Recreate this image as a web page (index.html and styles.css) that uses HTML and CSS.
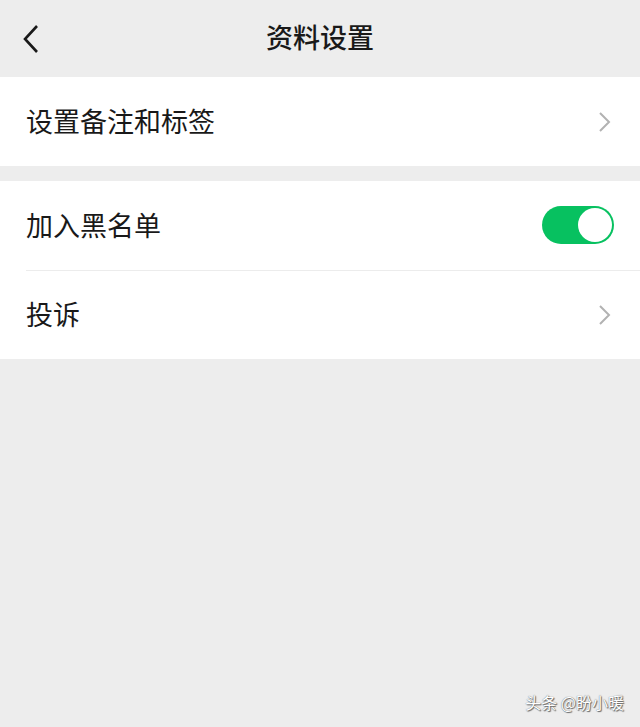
FILE: index.html
```html
<!DOCTYPE html>
<html>

<head>
    <title>资料设置</title>
    <link rel="stylesheet" href="styles.css">
</head>

<body>
    <div class="nav-bar">
        <span class="back">
            <svg width="18" height="30" viewBox="0 0 18 30">
                <path d="M15 2 L3 15 L15 28" fill="none" stroke="#191919" stroke-width="2.6" />
            </svg>
        </span>
        <div class="nav-title">资料设置</div>
    </div>

    <div class="group">
        <div class="cell">
            <span class="cell-label">设置备注和标签</span>
            <span class="arrow">
                <svg width="14" height="22" viewBox="0 0 14 22">
                    <path d="M2 2 L11 11 L2 20" fill="none" stroke="#b2b2b2" stroke-width="2" />
                </svg>
            </span>
        </div>
    </div>

    <div class="group">
        <div class="cell">
            <span class="cell-label">加入黑名单</span>
            <span class="switch on"><span class="knob"></span></span>
        </div>
        <div class="cell divided">
            <span class="cell-label">投诉</span>
            <span class="arrow">
                <svg width="14" height="22" viewBox="0 0 14 22">
                    <path d="M2 2 L11 11 L2 20" fill="none" stroke="#b2b2b2" stroke-width="2" />
                </svg>
            </span>
        </div>
    </div>

    <div class="watermark">头条 @盼小暖</div>
</body>

</html>
```

FILE: styles.css
```css
html,
body {
    height: 100%;
}

body {
    margin: 0;
    background-color: #ededed;
    font-family: "Noto Sans CJK SC", "Noto Sans", sans-serif;
    color: #191919;
    position: relative;
}

.nav-bar {
    height: 77px;
    display: flex;
    align-items: center;
    justify-content: center;
    position: relative;
}

.back {
    position: absolute;
    left: 22px;
    top: 24px;
    display: flex;
}

.nav-title {
    font-size: 27px;
    font-weight: 500;
    margin-top: -4px;
}

.group {
    background-color: #fff;
    margin-bottom: 15px;
}

.cell {
    height: 89px;
    display: flex;
    align-items: center;
    justify-content: space-between;
    padding: 0 26px 0 26px;
    position: relative;
}

.cell.divided::before {
    content: "";
    position: absolute;
    left: 26px;
    right: 0;
    top: 0;
    border-top: 1px solid #ececec;
}

.cell-label {
    font-size: 27px;
    margin-top: -2px;
}

.arrow {
    display: flex;
    margin-right: 2px;
}

.switch {
    width: 72px;
    height: 38px;
    border-radius: 19px;
    background-color: #e5e5e5;
    display: flex;
    align-items: center;
    padding: 0 2px;
    box-sizing: border-box;
    margin-top: -2px;
}

.switch.on {
    background-color: #07c160;
    justify-content: flex-end;
}

.knob {
    width: 34px;
    height: 34px;
    border-radius: 50%;
    background-color: #fff;
}

.watermark {
    position: absolute;
    right: 16px;
    bottom: 13px;
    font-size: 16px;
    color: #fff;
    text-shadow: 0 0 1px #555, 1px 1px 1px #666;
}
```
